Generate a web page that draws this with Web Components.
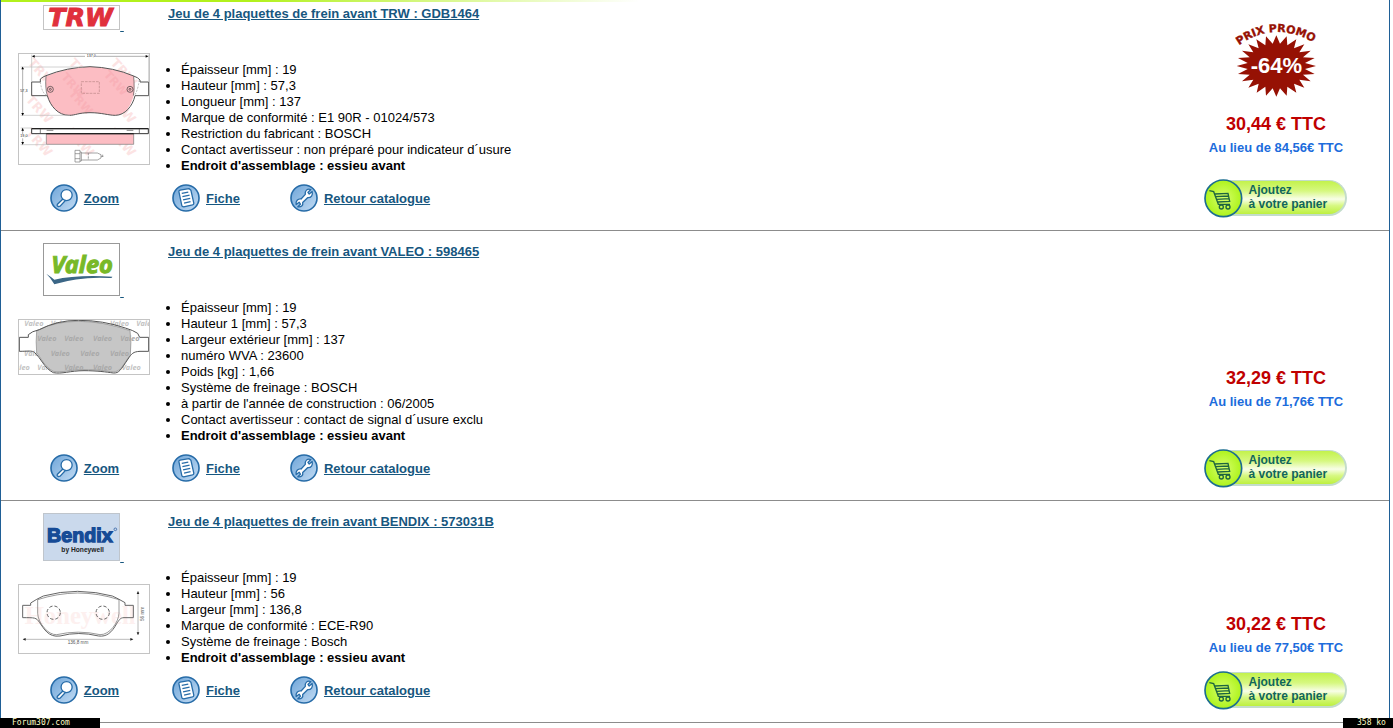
<!DOCTYPE html>
<html lang="fr">
<head>
<meta charset="utf-8">
<title>Plaquettes de frein avant</title>
<style>
    body {
        margin: 0 3px 0 0;
        background: #fff;
        color: #000;
        font: 13px/16px "Liberation Sans", Arial, sans-serif;
    }
</style>
</head>
<body>
<catalogue-list>
    <product-card reference="Jeu de 4 plaquettes de frein avant TRW : GDB1464">
        <brand-logo slot="logo" name="trw"></brand-logo>
        <pad-drawing slot="drawing" name="trw"></pad-drawing>
        <li>Épaisseur [mm] : 19</li>
        <li>Hauteur [mm] : 57,3</li>
        <li>Longueur [mm] : 137</li>
        <li>Marque de conformité : E1 90R - 01024/573</li>
        <li>Restriction du fabricant : BOSCH</li>
        <li>Contact avertisseur : non préparé pour indicateur d´usure</li>
        <li><b>Endroit d'assemblage : essieu avant</b></li>
        <price-tag slot="price" old="84,56€ TTC" promo="-64%">30,44 € TTC</price-tag>
    </product-card>
    <product-card reference="Jeu de 4 plaquettes de frein avant VALEO : 598465">
        <brand-logo slot="logo" name="valeo"></brand-logo>
        <pad-drawing slot="drawing" name="valeo"></pad-drawing>
        <li>Épaisseur [mm] : 19</li>
        <li>Hauteur 1 [mm] : 57,3</li>
        <li>Largeur extérieur [mm] : 137</li>
        <li>numéro WVA : 23600</li>
        <li>Poids [kg] : 1,66</li>
        <li>Système de freinage : BOSCH</li>
        <li>à partir de l'année de construction : 06/2005</li>
        <li>Contact avertisseur : contact de signal d´usure exclu</li>
        <li><b>Endroit d'assemblage : essieu avant</b></li>
        <price-tag slot="price" old="71,76€ TTC">32,29 € TTC</price-tag>
    </product-card>
    <product-card reference="Jeu de 4 plaquettes de frein avant BENDIX : 573031B">
        <brand-logo slot="logo" name="bendix"></brand-logo>
        <pad-drawing slot="drawing" name="bendix"></pad-drawing>
        <li>Épaisseur [mm] : 19</li>
        <li>Hauteur [mm] : 56</li>
        <li>Largeur [mm] : 136,8</li>
        <li>Marque de conformité : ECE-R90</li>
        <li>Système de freinage : Bosch</li>
        <li><b>Endroit d'assemblage : essieu avant</b></li>
        <price-tag slot="price" old="77,50€ TTC">30,22 € TTC</price-tag>
    </product-card>
</catalogue-list>
<corner-tag side="left">Forum307.com</corner-tag>
<corner-tag side="right">358 ko</corner-tag>

<script>
// Attach an open shadow root holding the given markup.
function render(element, html) {
    const template = document.createElement('template');
    template.innerHTML = html;
    element.attachShadow({ mode: 'open' }).appendChild(template.content.cloneNode(true));
}

// Brand logos: drawn on a grid of three units per pixel.
const LOGOS = {
    trw: `
<svg width="77" height="25" viewBox="0 0 231 75" role="img" aria-label="TRW">
    <rect width="231" height="75" fill="#fff"/>
    <text x="16" y="64" font-family="DejaVu Sans" font-weight="bold" font-style="italic" font-size="76" fill="#e0303c" stroke="#e0303c" stroke-width="3">TRW</text>
    <rect x="1.5" y="1.5" width="228" height="72" fill="none" stroke="#c4c4c4" stroke-width="3"/>
</svg>`,
    valeo: `
<svg width="77" height="53" viewBox="0 0 231 159" role="img" aria-label="Valeo">
    <rect width="231" height="159" fill="#fff"/>
    <text x="25" y="91" font-family="Noto Sans" font-weight="bold" font-style="italic" font-size="71" text-rendering="geometricPrecision" fill="#78b928" stroke="#78b928" stroke-width="3">Valeo</text>
    <path d="M10 92Q17 97 25 103L34 110Q100 95 208 101Q208 106 200 105Q110 100 34 124Q22 103 10 92Z" fill="#3b6686"/>
    <rect x="1.5" y="1.5" width="228" height="156" fill="none" stroke="#999" stroke-width="3"/>
</svg>`,
    bendix: `
<svg width="77" height="48" viewBox="0 0 231 144" role="img" aria-label="Bendix">
    <rect width="231" height="144" fill="#cad9ec"/>
    <text x="12" y="87" font-family="Liberation Sans" font-weight="bold" font-size="59" text-rendering="geometricPrecision" fill="#164b96" stroke="#164b96" stroke-width="4">Bendix</text>
    <circle cx="217" cy="49" r="4" fill="none" stroke="#164b96" stroke-width="2"/>
    <text x="55" y="117" font-family="Liberation Sans" font-weight="bold" font-size="20" fill="#222">by Honeywell</text>
    <rect x="1.5" y="1.5" width="228" height="141" fill="none" stroke="#bfc5cc" stroke-width="3"/>
</svg>`
};

// Repeat a watermark word at each given point.
function watermark(word, points, attributes, angle) {
    return points.map(([x, y]) =>
        `<text ${attributes} transform="translate(${x} ${y}) rotate(${angle})">${word}</text>`
    ).join('');
}

const DRAWINGS = {
    trw: `
<svg width="132" height="112" viewBox="54 159 396 336" role="img" aria-label="Plaquette TRW">
    <rect x="54" y="159" width="396" height="336" fill="#fff"/>
    ${watermark('TRW', [[82, 190], [205, 190], [330, 190], [76, 300], [325, 300], [75, 400], [200, 400], [325, 400]], 'font-family="DejaVu Sans" font-weight="bold" font-size="38" fill="#fce3e3"', 48)}
    <path d="M138 228Q200 202 270 200Q340 202 401 228C404 260 405 275 400 290C390 322 374 346 346 346C325 346 305 338 270 338S227 346 207 346C175 346 151 319 142 287Q135 260 138 228Z" fill="#fcbdc3"/>
    ${watermark('TRW', [[205, 282], [182, 232], [310, 225]], 'font-family="DejaVu Sans" font-weight="bold" font-size="34" fill="#f9b1b8"', 48)}
    <path d="M95 246H121V237Q129 230 138 227Q200 202 270 200Q340 202 401 228Q415 233 420 240V246H446V287H405C398 318 375 346 346 346C325 346 305 338 270 338S227 346 207 346C175 346 151 319 142 287H95Z" fill="none" stroke="#555" stroke-width="3"/>
    <path d="M138 228Q135 265 142 287M401 228Q404 265 400 287" fill="none" stroke="#555" stroke-width="2"/>
    <path d="M121 246Q126 282 142 287M418 240Q412 278 402 287" fill="none" stroke="#999" stroke-width="2" stroke-dasharray="6 4"/>
    <g fill="none" stroke="#333" stroke-width="2">
        <circle cx="151" cy="268" r="9"/><circle cx="151" cy="268" r="3"/>
        <circle cx="390" cy="268" r="9"/><circle cx="390" cy="268" r="3"/>
    </g>
    <path d="M244 245H298V280H244Z" fill="none" stroke="#b88" stroke-width="2" stroke-dasharray="8 3"/>
    <path d="M97 169H255M288 169H445M68 202V346M68 384V402M68 415V433" stroke="#888" stroke-width="2"/>
    <path d="M95 164V246M446 164V246M62 201H250M62 346H210M62 384H95M62 434H138" stroke="#bbb" stroke-width="2"/>
    <path d="M96 169l8-4v8zM445 169l-8-4v8zM68 200l-4 8h8zM68 347l-4-8h8zM68 384l-4 8h8zM68 434l-4-8h8z"/>
    <g font-family="Liberation Sans" font-size="11" fill="#222">
        <text x="260" y="172">137,0</text>
        <text x="61" y="277">57,3</text>
        <text x="61" y="412">19,0</text>
    </g>
    <path d="M139 401H401V433H139Z" fill="#fcbdc3" stroke="#777" stroke-width="2"/>
    <path d="M95 386H445V401H95Z" fill="#fff" stroke="#333" stroke-width="3"/>
    <path d="M95 386H445M139 401H401" stroke="#222" stroke-width="4"/>
    <path d="M121 387V400M418 387V400M140 391H160M380 391H400" stroke="#444" stroke-width="2"/>
    <g fill="none" stroke="#777" stroke-width="2">
        <path d="M225 451H240V486H225ZM225 461H240M225 476H240M240 456H244V483H240M244 459H292L303 464V474L292 480H244"/>
        <path d="M303 469H313M308 464V474M265 459V480" stroke-dasharray="7 3"/>
    </g>
    <rect x="55.5" y="160.5" width="393" height="333" fill="none" stroke="#c4c4c4" stroke-width="3"/>
</svg>`,
    valeo: `
<svg width="132" height="56" viewBox="54 252 396 168" role="img" aria-label="Plaquette Valeo">
    <rect x="54" y="252" width="396" height="168" fill="#fff"/>
    ${watermark('Valeo', [[73, 274], [152, 274], [241, 274], [330, 274], [409, 274], [72, 363], [32, 405], [112, 405], [365, 405]], 'font-family="Noto Sans" font-weight="bold" font-style="italic" font-size="22" text-rendering="geometricPrecision" fill="#c3c3c3"', 0)}
    <path d="M110 287Q165 259 235 259Q310 259 390 287Q395 320 391 360C372 385 362 411 340 411C315 407 290 404 252 404C210 404 185 414 162 410C132 396 122 365 110 354Q107 320 110 287Z" fill="#c6c6c6" stroke="#888" stroke-width="2"/>
    ${watermark('Valeo', [[112, 317], [193, 317], [279, 317], [361, 317], [152, 363], [241, 363], [330, 363], [193, 405], [279, 405]], 'font-family="Noto Sans" font-weight="bold" font-style="italic" font-size="22" text-rendering="geometricPrecision" fill="#a9a9a9"', 0)}
    <path d="M58 307H85V299Q95 289 118 284Q170 256 235 256Q310 256 376 279Q400 286 413 295L419 307H446V349H420C399 350 395 356 384 372C362 405 357 415 340 414C320 411 290 407 252 407C210 407 185 418 160 413C132 399 123 369 103 352C97 346 82 349 58 349Z" fill="none" stroke="#555" stroke-width="3"/>
    <rect x="55.5" y="253.5" width="393" height="165" fill="none" stroke="#c4c4c4" stroke-width="3"/>
</svg>`,
    bendix: `
<svg width="132" height="70" viewBox="54 237 396 210" role="img" aria-label="Plaquette Bendix">
    <rect x="54" y="237" width="396" height="210" fill="#fff"/>
    <text x="74" y="358" font-family="Liberation Serif" font-weight="bold" font-size="74" fill="#fdf0ef">Honeywell</text>
    <g fill="none" stroke="#666" stroke-width="3">
        <path d="M68 301H92V294Q110 282 130 273Q180 259 233 259Q290 260 337 273Q355 281 375 293V301H400V338H372C360 338 357 346 350 356C335 383 320 396 296 393Q235 378 180 393C145 398 132 371 119 353C109 337 104 338 68 338Z"/>
        <path d="M113 284V325C114 354 145 391 170 389Q235 374 300 389C330 390 356 350 357 325V284Q295 264 233 264Q170 265 113 284Z" stroke-width="2"/>
        <circle cx="161" cy="323" r="20" stroke-dasharray="10 6"/>
        <circle cx="308" cy="323" r="20" stroke-dasharray="10 6"/>
    </g>
    <path d="M70 403H398M414 260V388" stroke="#999" stroke-width="2"/>
    <path d="M68 403l9-4v8zM400 403l-9-4v8zM414 258l-4 9h8zM414 391l-4-9h8z" fill="#222"/>
    <g font-family="Liberation Sans" font-size="14" fill="#555">
        <text x="203" y="417">136,8 mm</text>
        <text transform="translate(431 348) rotate(-90)">56 mm</text>
    </g>
    <rect x="55.5" y="238.5" width="393" height="207" fill="none" stroke="#c4c4c4" stroke-width="3"/>
</svg>`
};

const ICONS = {
    zoom: `
<path d="M42 44L23 62Q20 67 25 69L31 68L48 50" fill="#fff" stroke="#276ca8" stroke-width="4"/>
<circle cx="51" cy="34" r="17" fill="#fff" stroke="#276ca8" stroke-width="4"/>`,
    fiche: `
<path d="M21 23Q21 20 25 19L52 14L58 19L67 59Q67 63 63 64L36 70Q31 70 30 66Z" fill="#fff" stroke="#276ca8" stroke-width="4" stroke-linejoin="round"/>
<path d="M30 29L50 25M32 39L54 34M34 49L56 44M37 59L57 54" stroke="#276ca8" stroke-width="4"/>`,
    retour: `
<path d="M64 17L55 26L59 31L68 23C71 34 65 43 54 42L39 57C41 66 34 72 24 70L32 62L28 56L19 63C17 52 24 45 34 46L47 32C45 21 53 13 64 17Z" fill="#fff" stroke="#276ca8" stroke-width="4" stroke-linejoin="round"/>`
};

// Frame around the whole catalogue with the green strip on top.
class CatalogueList extends HTMLElement {
    constructor() {
        super();
        render(this, `
<style>
    :host {
        display: block;
        border: solid #1f5f96;
        border-width: 0 1px;
    }

    .strip {
        height: 2px;
        background: linear-gradient(to right, #b2f11c 0, #b2f11c 18%, #fff 46%);
    }
</style>
<div class="strip"></div>
<slot></slot>
`);
    }
}

class BrandLogo extends HTMLElement {
    constructor() {
        super();
        render(this, `
<style>
    :host {
        display: block;
        text-align: center;
    }

    a {
        color: #17577f;
    }
</style>
<a href="#">${LOGOS[this.getAttribute('name')]}&nbsp;</a>
`);
    }
}

class PadDrawing extends HTMLElement {
    constructor() {
        super();
        render(this, `
<style>
    :host, svg {
        display: block;
    }
</style>
${DRAWINGS[this.getAttribute('name')]}
`);
    }
}

// Round blue icon followed by an underlined label.
class ActionLink extends HTMLElement {
    constructor() {
        super();
        render(this, `
<style>
    :host {
        display: block;
    }

    a {
        display: flex;
        align-items: center;
        gap: 6px;
        color: #17577f;
        font-weight: bold;
    }

    span {
        padding-top: 2px;
    }
</style>
<a href="#">
    <svg width="28" height="28" viewBox="0 0 86 86" aria-hidden="true">
        <defs>
            <linearGradient id="disc" x1="0" y1="0" x2="1" y2="1">
                <stop offset="0" stop-color="#6ea5d8"/>
                <stop offset="1" stop-color="#c3dcf4"/>
            </linearGradient>
        </defs>
        <circle cx="43" cy="43" r="40" fill="url(#disc)" stroke="#276ca8" stroke-width="5"/>
        ${ICONS[this.getAttribute('icon')]}
    </svg>
    <span><slot></slot></span>
</a>
`);
    }
}

class CartButton extends HTMLElement {
    constructor() {
        super();
        render(this, `
<style>
    :host {
        display: block;
    }

    button {
        display: flex;
        align-items: center;
        width: 143px;
        padding: 0;
        border: 0;
        background: none;
        color: #10655c;
        font: bold 12px/14px "Liberation Sans", Arial, sans-serif;
        text-align: left;
        cursor: pointer;
    }

    svg {
        flex: none;
        position: relative;
    }

    .label {
        flex: 1;
        box-sizing: border-box;
        height: 36px;
        margin-left: -20px;
        padding: 2px 0 0 26px;
        border: solid #c3dccb;
        border-width: 1px 2px 2px 0;
        border-radius: 0 18px 18px 0;
        background: linear-gradient(#c3f24c, #d6f880 30%, #f8fee8 55%, #d6f880 75%, #bdf03f);
    }
</style>
<button type="button">
    <svg width="39" height="39" viewBox="0 0 117 117" aria-hidden="true">
        <defs>
            <radialGradient id="lime">
                <stop offset="0" stop-color="#d6ff6c"/>
                <stop offset="1" stop-color="#aef31c"/>
            </radialGradient>
        </defs>
        <circle cx="58" cy="58" r="55" fill="url(#lime)" stroke="#1b6d90" stroke-width="5"/>
        <g fill="none" stroke="#1d6540" stroke-width="4">
            <path d="M16 35L29 38L43 76H78M32 45L72 43L77 67L41 69M34 53L74 51M38 61L76 59"/>
            <circle cx="52" cy="84" r="6"/>
            <circle cx="72" cy="84" r="6"/>
        </g>
    </svg>
    <span class="label">Ajoutez<br>à votre panier</span>
</button>
`);
    }
}

// Starburst with the discount, under an arched caption.
class PromoBadge extends HTMLElement {
    constructor() {
        super();
        render(this, `
<style>
    :host, svg {
        display: block;
    }
</style>
<svg width="82" height="78" viewBox="0 0 246 234" role="img">
    <defs><path id="arch" d="M12 76Q122 -4 250 76"/></defs>
    <polygon points="${this.burst(24)}" fill="#961104"/>
    <text font-family="DejaVu Sans" font-weight="bold" font-size="33" fill="#961104" stroke="#961104" stroke-width="1"><textPath href="#arch">PRIX PROMO</textPath></text>
    <text x="124" y="160" text-anchor="middle" font-family="Liberation Sans" font-weight="bold" font-size="66" fill="#fff">${this.getAttribute('value')}</text>
</svg>
`);
    }

    // Points of an elliptic star with the given number of spikes.
    burst(spikes) {
        const points = [];
        for (let i = 0; i < spikes * 2; i++) {
            const angle = Math.PI * i / spikes;
            const reach = i % 2 ? 0.73 : 1;
            points.push(`${Math.round(124 + 119 * reach * Math.cos(angle))},${Math.round(138 + 92 * reach * Math.sin(angle))}`);
        }
        return points.join(' ');
    }
}

class PriceTag extends HTMLElement {
    constructor() {
        super();
        const promo = this.getAttribute('promo');
        render(this, `
<style>
    :host {
        display: block;
        position: relative;
        font-weight: bold;
        text-align: center;
    }

    .price {
        color: #c00000;
        font-size: 18px;
        line-height: 28px;
    }

    .old {
        color: #1c6cdc;
        line-height: 19px;
    }

    promo-badge {
        position: absolute;
        left: 50%;
        bottom: 100%;
        margin: 0 0 12px -41px;
    }
</style>
${promo ? `<promo-badge value="${promo}"></promo-badge>` : ''}
<div class="price"><slot></slot></div>
<div class="old">Au lieu de ${this.getAttribute('old')}</div>
`);
    }
}

class ProductCard extends HTMLElement {
    constructor() {
        super();
        render(this, `
<style>
    :host {
        display: grid;
        grid-template-columns: 167px 1fr 228px;
        grid-template-rows: 17px auto 28px;
        padding: 12px 0 18px;
        border-bottom: 1px solid #8c8c8c;
    }

    :host(:first-of-type) {
        padding-top: 3px;
    }

    .pictures {
        grid-area: 1 / 1 / 3 / 2;
        display: flex;
        flex-direction: column;
        align-items: center;
        gap: 19px;
        padding-right: 2px;
        /* the pictures never stretch the row, the feature list does */
        height: 0;
    }

    h2 {
        grid-area: 1 / 2;
        align-self: end;
        margin: 0;
        font-size: 13px;
        line-height: 16px;
    }

    h2 a {
        color: #17577f;
    }

    ul {
        grid-area: 2 / 2;
        margin: 40px 0 10px;
        padding: 0 0 0 13px;
    }

    .price {
        grid-area: 2 / 3;
        align-self: center;
        margin: 40px 0 10px;
        padding: 31px 0 0 2px;
    }

    .zoom {
        grid-area: 3 / 1;
        justify-self: center;
    }

    .actions {
        grid-area: 3 / 2;
        display: flex;
        gap: 50px;
        padding-left: 4px;
    }

    .cart {
        grid-area: 3 / 3;
        place-self: center;
    }
</style>
<div class="pictures">
    <slot name="logo"></slot>
    <slot name="drawing"></slot>
</div>
<h2><a href="#">${this.getAttribute('reference')}</a></h2>
<ul><slot></slot></ul>
<div class="price"><slot name="price"></slot></div>
<action-link class="zoom" icon="zoom">Zoom</action-link>
<div class="actions">
    <action-link icon="fiche">Fiche</action-link>
    <action-link icon="retour">Retour catalogue</action-link>
</div>
<cart-button class="cart"></cart-button>
`);
    }
}

// Small black label stuck to a bottom corner of the window.
class CornerTag extends HTMLElement {
    constructor() {
        super();
        render(this, `
<style>
    :host {
        position: fixed;
        bottom: 0;
        left: 0;
        box-sizing: border-box;
        width: 100px;
        padding-left: 12px;
        background: #000;
        color: #ffffc8;
        font: 8px/10px "DejaVu Sans Mono", monospace;
    }

    :host([side="right"]) {
        left: auto;
        right: 0;
        width: 50px;
        padding-left: 14px;
    }
</style>
<slot></slot>
`);
    }
}

window.customElements.define('catalogue-list', CatalogueList);
window.customElements.define('brand-logo', BrandLogo);
window.customElements.define('pad-drawing', PadDrawing);
window.customElements.define('action-link', ActionLink);
window.customElements.define('cart-button', CartButton);
window.customElements.define('promo-badge', PromoBadge);
window.customElements.define('price-tag', PriceTag);
window.customElements.define('product-card', ProductCard);
window.customElements.define('corner-tag', CornerTag);
</script>
</body>
</html>
